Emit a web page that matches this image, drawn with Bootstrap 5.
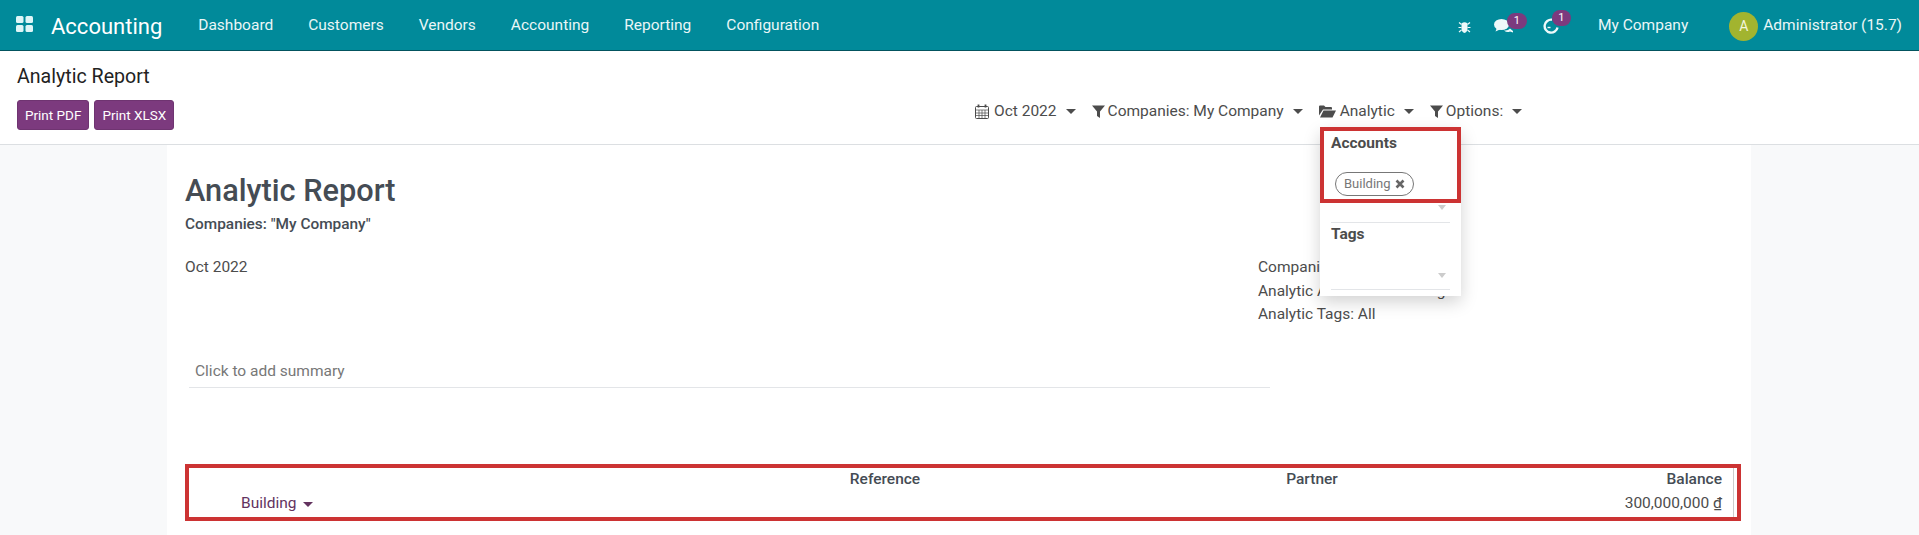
<!DOCTYPE html>
<html>
<head>
    <meta charset="UTF-8">
    <title>Analytic Report</title>
    <link href="https://cdn.jsdelivr.net/npm/bootstrap@5.3.0/dist/css/bootstrap.min.css" rel="stylesheet">
    <style>
        html, body { height: 535px; overflow: hidden; }
        body { font-family: Roboto, "Liberation Sans", sans-serif; font-size: 15.5px; color: #4c4c4c; background: #f8f9fa; }
        .top-bar { height: 51px; background: #018a9a; border-bottom: 1px solid #03545e; color: #fff; padding: 2px 16px 0; }
        .apps-icon { width: 17px; height: 16px; margin: -5px 18px 0 0; }
        .brand-name { font-size: 22px; margin-right: 36px; color: #fff; }
        .top-link { color: #eaf6f7; text-decoration: none; font-size: 15.5px; margin-right: 35px; }
        .top-right { margin-left: auto; margin-right: 1px; }
        .top-icon { position: relative; display: flex; }
        .bug-icon { margin-right: 23px; }
        .chat-icon { margin-right: 30px; }
        .clock-icon { margin-right: 39px; }
        .mini-badge { position: absolute; top: -6px; left: 13px; width: 20px; height: 16px; border-radius: 8px; background: #7c3a7e; color: #fff; font-size: 11px; line-height: 16px; text-align: center; }
        .clock-icon .mini-badge { top: -8px; left: 9px; width: 19px; }
        .user-avatar { width: 29px; height: 29px; margin: 0 5px 0 41px; border-radius: 50%; background: #a2b42f; color: #f4f6dc; font-size: 14px; line-height: 29px; text-align: center; }
        .ctrl-panel { height: 94px; background: #fff; border-bottom: 1px solid #dcdfe2; padding: 14px 17px 0; position: relative; }
        .ctrl-title { font-size: 19.6px; color: #222; line-height: 24px; margin-bottom: 11px; }
        .btn-row { gap: 5px; }
        .btn-odoo { background: #7c3a7e; border: 1px solid #6f3471; color: #fff; font-size: 13.5px; padding: 0 7px; height: 30px; line-height: 28px; border-radius: 3px; }
        .filter-row { position: absolute; left: 975px; top: 50px; gap: 16px; }
        .filter-item { display: flex; align-items: center; gap: 3px; color: #4c4c4c; white-space: nowrap; line-height: 20px; }
        .cal-icon { margin-right: 2px; }
        .folder-icon { margin-right: 1px; }
        .caret-down { display: inline-block; width: 0; height: 0; margin-left: 6px; vertical-align: middle; border-top: 5px solid currentColor; border-left: 5px solid transparent; border-right: 5px solid transparent; }
        .analytic-menu { position: absolute; left: 1320px; top: 128px; width: 141px; height: 168px; background: #fff; z-index: 10; box-shadow: 0 6px 16px rgba(0,0,0,.18); padding: 4px 11px 0; }
        .analytic-menu h6 { font-size: 15.5px; font-weight: 700; color: #4c4c4c; margin: 0; line-height: 22px; }
        .mark-box { position: absolute; left: 0; top: -1px; width: 141px; height: 76px; border: 4px solid #cc3333; pointer-events: none; }
        .tag-pill { display: inline-flex; align-items: center; gap: 4px; height: 24px; margin-left: 4px; padding: 0 8px; border: 1px solid #777; border-radius: 12px; font-size: 13px; color: #777; }
        .select-row { position: relative; border-bottom: 1px solid #e3e5e8; }
        .select-first { height: 55px; margin-top: 14px; padding-top: 4px; }
        .select-second { height: 45px; }
        .select-arrow { position: absolute; right: 4px; top: 37px; border-top: 5px solid #ccc; border-left: 4px solid transparent; border-right: 4px solid transparent; }
        .select-second .select-arrow { top: 28px; }
        .report-sheet { width: 1584px; margin-left: 167px; height: 390px; background: #fff; padding: 0 10px 0 18px; }
        .report-title { font-size: 30.7px; font-weight: 500; color: #454c54; line-height: 38px; padding-top: 27px; }
        .report-sub { font-size: 15.4px; font-weight: 500; color: #454c54; margin-top: 4px; line-height: 20px; }
        .info-row { margin-top: 22px; }
        .info-line { line-height: 23.5px; }
        .info-right { width: 483px; }
        .summary-box { width: 1081px; margin-left: 4px; margin-top: 32px; padding: 0 6px 3px; border-bottom: 1px solid #e3e5e8; color: #777; line-height: 25px; }
        .result-box { margin-top: 76px; height: 57px; border: 4px solid #cc3333; padding-right: 3px; }
        .result-tbl { width: 100%; border-collapse: collapse; table-layout: fixed; }
        .result-tbl th { font-weight: 500; color: #454c54; height: 18px; padding: 0; }
        .result-tbl td { height: 26px; padding: 0; }
        .acc-name { color: #63335f; padding-left: 52px !important; }
        .amt-col { text-align: right; padding-right: 11px !important; border-right: 1px solid #ccc; }
        .w-acc { width: 411px; }
        .w-ref { width: 570px; }
        .w-par { width: 284px; }
    </style>
</head>
<body>
    <nav class="top-bar d-flex align-items-center">
        <svg class="apps-icon" viewBox="0 0 17 16" fill="#dff5f7">
            <rect x="0" y="0" width="7.500" height="7" rx="1.500"/><rect x="9.500" y="0" width="7.500" height="7" rx="1.500"/>
            <rect x="0" y="9" width="7.500" height="7" rx="1.500"/><rect x="9.500" y="9" width="7.500" height="7" rx="1.500"/>
        </svg>
        <span class="brand-name">Accounting</span>
        <a class="top-link" href="#">Dashboard</a>
        <a class="top-link" href="#">Customers</a>
        <a class="top-link" href="#">Vendors</a>
        <a class="top-link" href="#">Accounting</a>
        <a class="top-link" href="#">Reporting</a>
        <a class="top-link" href="#">Configuration</a>
        <div class="top-right d-flex align-items-center">
            <svg class="bug-icon" width="13" height="13" viewBox="0 0 13 13" fill="#eef9fa">
                <path d="M3.500 3.500Q6.500 1 9.500 3.500V9Q9 12.500 6.500 13Q4 12.500 3.500 9z"/>
                <path d="M1 2.500l2.500 2M12 2.500l-2.500 2M.5 7.500h3M12.500 7.500h-3M1 12l2.500-2M12 12l-2.500-2" stroke="#eef9fa" stroke-width="1.200"/>
            </svg>
            <div class="top-icon chat-icon">
                <svg width="19" height="15" viewBox="0 0 19 15" fill="#eef9fa"><ellipse cx="7.500" cy="5.500" rx="7.500" ry="5.500"/><path d="M3 8.500L1.500 12.500 7 10z"/><path d="M10 11.500q4 .5 6-2l3 2.500v1.500l-3-1q-3 1.500-6-1z"/></svg>
                <span class="mini-badge">1</span>
            </div>
            <div class="top-icon clock-icon">
                <svg width="16" height="16" viewBox="0 0 16 16" fill="none" stroke="#eef9fa" stroke-width="2.400"><path d="M9 1.700A6.500 6.500 0 1 0 14.500 9.500"/><path d="M4.500 9.500h3" stroke-width="1.400"/></svg>
                <span class="mini-badge">1</span>
            </div>
            <span class="top-link m-0">My Company</span>
            <div class="user-avatar">A</div>
            <span class="top-link m-0">Administrator (15.7)</span>
        </div>
    </nav>

    <div class="ctrl-panel">
        <div class="ctrl-title">Analytic Report</div>
        <div class="d-flex btn-row">
            <button class="btn-odoo">Print PDF</button>
            <button class="btn-odoo">Print XLSX</button>
        </div>
        <div class="filter-row d-flex">
            <span class="filter-item">
                <svg class="cal-icon" width="14" height="15" viewBox="0 0 14 15" fill="none" stroke="#4c4c4c"><rect x=".5" y="2.500" width="13" height="12" rx="1"/><path d="M1 6h12M1 9h12M1 11.500h12M4 6v8M7 6v8M10 6v8" stroke-width=".7"/><path d="M3.500 .5v3M10.500 .5v3" stroke-width="1.800"/></svg>
                Oct 2022<span class="caret-down"></span>
            </span>
            <span class="filter-item">
                <svg width="13" height="13" viewBox="0 0 13 13" fill="#4c4c4c"><path d="M0 .5h13L8 6.500V13L5 11V6.500z"/></svg>
                Companies: My Company<span class="caret-down"></span>
            </span>
            <span class="filter-item">
                <svg class="folder-icon" width="17" height="13" viewBox="0 0 17 13" fill="#4c4c4c"><path d="M0 1.500Q0 .5 1 .5h4l1.500 1.500H12q1 0 1 1v1.500H4L0 10.500z"/><path d="M4.500 5.500H17l-3.500 7H1z"/></svg>
                Analytic<span class="caret-down"></span>
            </span>
            <span class="filter-item">
                <svg width="13" height="13" viewBox="0 0 13 13" fill="#4c4c4c"><path d="M0 .5h13L8 6.500V13L5 11V6.500z"/></svg>
                Options:<span class="caret-down"></span>
            </span>
        </div>
    </div>

    <div class="analytic-menu">
        <div class="mark-box"></div>
        <h6>Accounts</h6>
        <div class="select-row select-first">
            <span class="tag-pill">Building
                <svg width="10" height="10" viewBox="0 0 10 10" stroke="#666" stroke-width="2.600"><path d="M1.500 1.500l7 7M8.500 1.500l-7 7"/></svg>
            </span>
            <span class="select-arrow"></span>
        </div>
        <h6>Tags</h6>
        <div class="select-row select-second"><span class="select-arrow"></span></div>
    </div>

    <div class="report-sheet">
        <div class="report-title">Analytic Report</div>
        <div class="report-sub">Companies: "My Company"</div>
        <div class="d-flex justify-content-between info-row">
            <div class="info-line">Oct 2022</div>
            <div class="info-line info-right">
                <div>Companies: My Company</div>
                <div>Analytic Accounts: Building</div>
                <div>Analytic Tags: All</div>
            </div>
        </div>
        <div class="summary-box">Click to add summary</div>
        <div class="result-box">
            <table class="result-tbl">
                <tr><th class="w-acc"></th><th class="w-ref text-center">Reference</th><th class="w-par text-center">Partner</th><th class="amt-col">Balance</th></tr>
                <tr><td class="acc-name">Building<span class="caret-down"></span></td><td></td><td></td><td class="amt-col">300,000,000 <u>₫</u></td></tr>
            </table>
        </div>
    </div>
    <script src="https://cdn.jsdelivr.net/npm/bootstrap@5.3.0/dist/js/bootstrap.bundle.min.js"></script>
</body>
</html>
